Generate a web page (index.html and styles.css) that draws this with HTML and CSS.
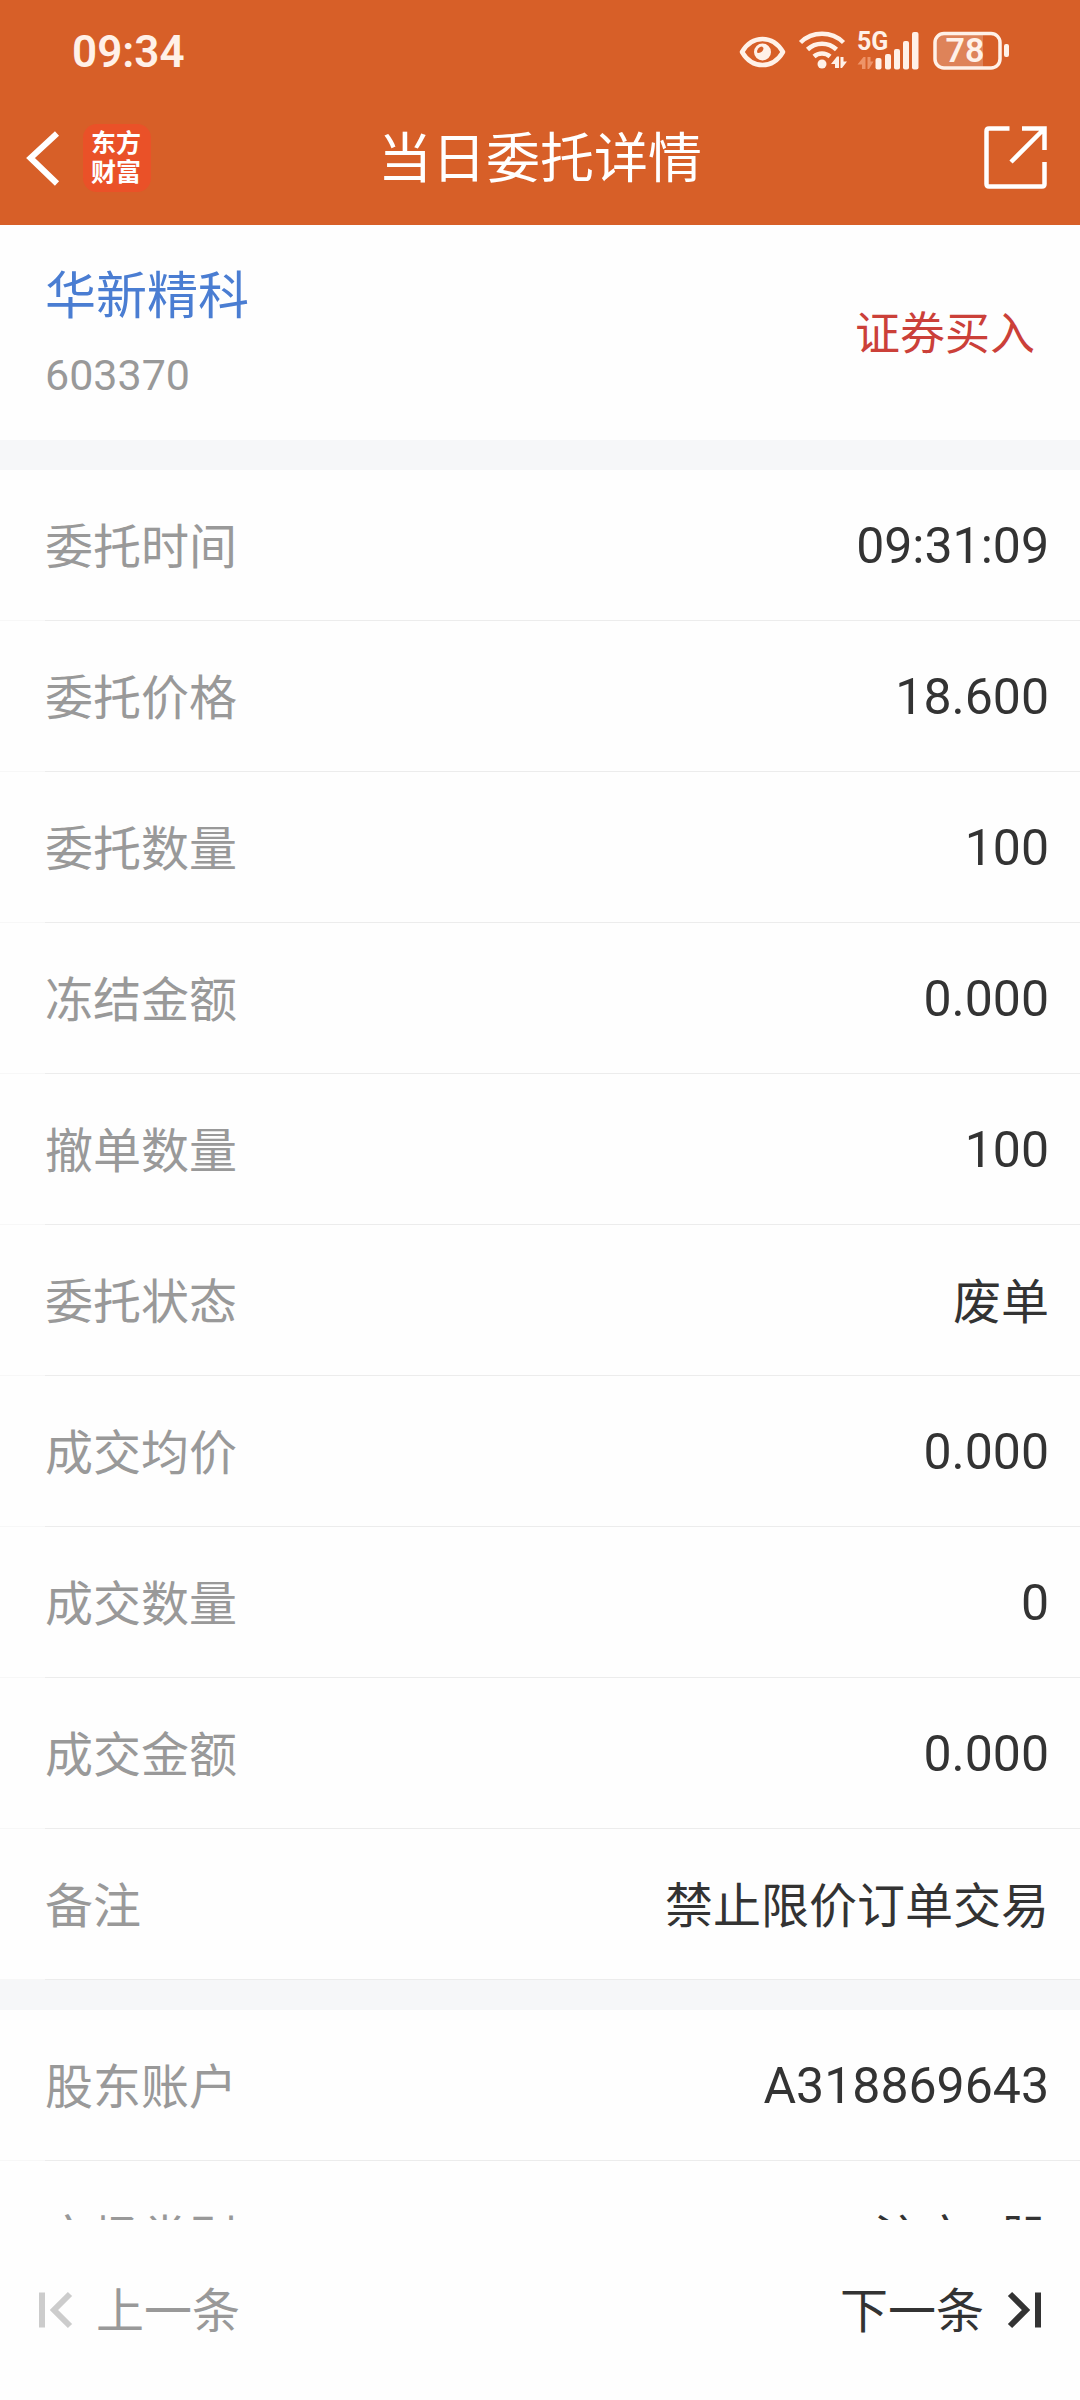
FILE: index.html
```html
<!DOCTYPE html>
<html lang="zh-CN">
<head>
<meta charset="utf-8">
<meta name="viewport" content="width=device-width, initial-scale=1">
<title>当日委托详情</title>
<link rel="stylesheet" href="styles.css">
</head>
<body>
<div class="app">
  <header class="header">
    <div class="status">
      <time class="status-time">09:34</time>
      <div class="status-icons">
        <svg width="50" height="50" viewBox="737 26 50 50" aria-hidden="true">
          <path d="M742 52C747 43.500 754 39 762.500 39S778 43.500 783 52C778 60.500 771 65 762.500 65S747 60.500 742 52Z" fill="none" stroke="#fff1e8" stroke-width="4.500" stroke-linejoin="round"/>
          <circle cx="762.500" cy="52" r="8.500" fill="#fff1e8"/>
          <path d="M757 52.500a5.500 5.500 0 0 1 5-6l1.500 1.500a5 5 0 0 1-5 5Z" fill="#d75f28"/>
        </svg>
        <svg width="50" height="50" viewBox="797 26 50 50" aria-hidden="true">
          <g fill="none" stroke="#fff1e8" stroke-width="4.500">
            <path d="M800.500 42.500a31 31 0 0 1 43 0"/>
            <path d="M807.500 49.500a21 21 0 0 1 29 0"/>
            <path d="M814 56.500a12 12 0 0 1 16 0"/>
          </g>
          <circle cx="822" cy="64" r="4.500" fill="#fff1e8"/>
          <path d="M831 64l6-7.500h2V68H835v-4ZM840.500 57h3v4.500h3.500l-5 6.500h-1.500Z" fill="#fff1e8"/>
        </svg>
        <svg width="64" height="50" viewBox="857 26 64 50" role="img" aria-label="5G">
          <text class="net" x="857" y="50">5G</text>
          <path d="M857.500 64.500l6-7.500h2v12H862v-4.500ZM867.500 57h3v4.500h3l-4.500 7.500h-1.500Z" fill="#ee9468"/>
          <g fill="#fff1e8">
            <rect x="875.500" y="58" width="6" height="11.500" rx="2"/>
            <rect x="885" y="54" width="6" height="15.500" rx="2"/>
            <rect x="894" y="49" width="6" height="20.500" rx="2"/>
            <rect x="903" y="41" width="6" height="28.500" rx="2"/>
            <rect x="912" y="32" width="6.500" height="37.500" rx="2"/>
          </g>
        </svg>
        <svg width="80" height="50" viewBox="931 26 80 50" role="img" aria-label="78%">
          <path d="M943 34h40v33h-40q-8-1-8-8v-17q0-7 8-8Z" fill="#de8359"/>
          <rect x="935" y="33.500" width="65" height="34.500" rx="9" fill="none" stroke="#fff1e8" stroke-width="3.500"/>
          <rect x="1004" y="44" width="5" height="13" rx="2" fill="#fff1e8"/>
          <text class="charge" x="965" y="62" text-anchor="middle">78</text>
        </svg>
      </div>
    </div>
    <nav class="nav">
      <div class="nav-side">
        <button class="icon-button" type="button" aria-label="返回">
          <svg width="36" height="60" viewBox="25 127 36 60" aria-hidden="true"><path d="M57 132.500L30.500 157L57 182.500" fill="none" stroke="#fff" stroke-width="6"/></svg>
        </button>
        <span class="logo">东方<br>财富</span>
      </div>
      <h1 class="title">当日委托详情</h1>
      <div class="nav-side nav-right">
        <button class="icon-button" type="button" aria-label="分享">
          <svg width="64" height="64" viewBox="984 126 64 64" aria-hidden="true">
            <path d="M1009.500 128.500H989q-2.500 0-2.500 2.500V184q0 2.500 2.500 2.500H1042q2.500 0 2.500-2.500V162M1022 128.500H1044.500V150M1043 130L1011 162" fill="none" stroke="#fff" stroke-width="4.500"/>
          </svg>
        </button>
      </div>
    </nav>
  </header>

  <main class="content">
    <section class="stock">
      <div>
        <a class="stock-name" href="#">华新精科</a>
        <div class="stock-code">603370</div>
      </div>
      <span class="side">证券买入</span>
    </section>
    <dl class="rows">
      <div class="row"><dt>委托时间</dt><dd>09:31:09</dd></div>
      <div class="row"><dt>委托价格</dt><dd>18.600</dd></div>
      <div class="row"><dt>委托数量</dt><dd>100</dd></div>
      <div class="row"><dt>冻结金额</dt><dd>0.000</dd></div>
      <div class="row"><dt>撤单数量</dt><dd>100</dd></div>
      <div class="row"><dt>委托状态</dt><dd class="words">废单</dd></div>
      <div class="row"><dt>成交均价</dt><dd>0.000</dd></div>
      <div class="row"><dt>成交数量</dt><dd>0</dd></div>
      <div class="row"><dt>成交金额</dt><dd>0.000</dd></div>
      <div class="row"><dt>备注</dt><dd class="words">禁止限价订单交易</dd></div>
    </dl>
    <dl class="rows">
      <div class="row"><dt>股东账户</dt><dd>A318869643</dd></div>
      <div class="row"><dt>市场类别</dt><dd class="words">沪市A股</dd></div>
    </dl>
  </main>

  <footer class="pager">
    <button class="pager-button pager-prev" type="button">
      <svg width="36" height="40" viewBox="38 2290 36 40" aria-hidden="true"><path d="M42 2292.500V2327.500M70 2294L54 2310L70 2326" fill="none" stroke="#ccc" stroke-width="6"/></svg>
      <span>上一条</span>
    </button>
    <button class="pager-button" type="button">
      <span>下一条</span>
      <svg width="36" height="40" viewBox="1006 2290 36 40" aria-hidden="true"><path d="M1038 2292.500V2327.500M1010 2294L1026 2310L1010 2326" fill="none" stroke="#333" stroke-width="6"/></svg>
    </button>
  </footer>
</div>
</body>
</html>
```
FILE: styles.css
```css
* {
  box-sizing: border-box;
}

body {
  margin: 0;
  background: #fefefe;
  color: #333;
  font-family: Roboto, "Noto Sans CJK SC", sans-serif;
}

button {
  border: 0;
  padding: 0;
  background: none;
  color: inherit;
  font: inherit;
}

svg {
  display: block;
}

.app {
  display: flex;
  flex-direction: column;
  height: 100vh;
}

/* Header: system status line and title bar */
.header {
  flex: none;
  background: #d75f28;
  color: #fff;
}

.status {
  display: flex;
  align-items: center;
  justify-content: space-between;
  height: 102px;
  padding: 0 69px 0 72px;
  color: #fff1e8;
}

.status-time {
  padding-top: 2px;
  font-size: 44px;
  font-weight: 600;
  line-height: 52px;
}

.status-icons {
  display: flex;
  gap: 10px;
}

.net {
  fill: #fff1e8;
  font-family: "Liberation Sans Narrow", Roboto, sans-serif;
  font-size: 25px;
  font-weight: 700;
}

.charge {
  fill: #fff1e8;
  font-size: 34px;
  font-weight: 600;
}

.nav {
  display: grid;
  grid-template-columns: 1fr auto 1fr;
  align-items: center;
  height: 123px;
  padding: 0 32px 12px;
}

.nav-side {
  display: flex;
  align-items: center;
  gap: 22px;
  margin-left: -7px;
}

.nav-right {
  justify-content: flex-end;
}

.logo {
  display: grid;
  place-content: center;
  width: 68px;
  height: 68px;
  padding-right: 2px;
  border-radius: 14px;
  background: #ea5128;
  font-size: 25px;
  font-weight: 700;
  line-height: 29px;
}

.title {
  margin: 0;
  padding-top: 5px;
  font-size: 54px;
  font-weight: 400;
  line-height: 80px;
}

/* Scrolling order details */
.content {
  flex: 1;
  min-height: 0;
  overflow-y: auto;
  scrollbar-width: none;
}

.stock {
  display: flex;
  align-items: center;
  justify-content: space-between;
  height: 215px;
  padding: 4px 45px 0;
}

.stock-name {
  display: block;
  padding-top: 4px;
  color: #4a7dd2;
  font-size: 51px;
  line-height: 76px;
  text-decoration: none;
}

.stock-code {
  color: #999;
  font-size: 43px;
  line-height: 80px;
}

.side {
  color: #cb4039;
  font-size: 45px;
  line-height: 68px;
}

.rows {
  margin: 0;
  border-top: 30px solid #f6f7f9;
}

.row {
  display: flex;
  align-items: center;
  justify-content: space-between;
  height: 151px;
  padding: 0 31px 0 45px;
  background: linear-gradient(to right, #f7f7f7 45px, #ececec 45px) bottom / 100% 1px no-repeat;
}

.row dt {
  padding-top: 4px;
  color: #999;
  font-size: 48px;
  line-height: 72px;
}

.row dd {
  margin: 0;
  font-size: 50px;
  line-height: 72px;
}

.row .words {
  padding-top: 4px;
  font-size: 48px;
}

/* Previous / next record */
.pager {
  display: flex;
  flex: none;
  align-items: center;
  justify-content: space-between;
  height: 180px;
  padding: 0 38px;
}

.pager-button {
  display: flex;
  align-items: center;
  gap: 22px;
  font-size: 48px;
  line-height: 72px;
}

.pager-button span {
  padding-top: 4px;
}

.pager-prev {
  color: #999;
}
```
